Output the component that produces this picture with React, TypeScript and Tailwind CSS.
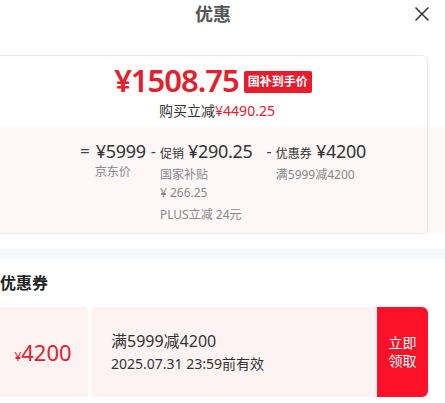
export default function App() {
  return (
    <div className="w-[445px] h-[403px] overflow-hidden bg-white font-['Noto_Sans','Noto_Sans_CJK_SC',sans-serif] text-[#333]">
      <header className="relative h-[28px] flex items-center justify-center">
        <h1 className="text-[18px] font-bold text-[#555] ml-[-19px] leading-none">优惠</h1>
        <button className="absolute right-[15px] top-[6px] text-[#333]">
          <svg width="16" height="16" viewBox="0 0 16 16" fill="none" stroke="currentColor" strokeWidth="1.5">
            <path d="M1.5 1.5L14.5 14.5M14.5 1.5L1.5 14.5" />
          </svg>
        </button>
      </header>

      <section className="mt-[27px] bg-[linear-gradient(#fff_72px,#fdf8f8_72px,#fdf8f8_178px,#fff_178px)]">
        <div className="ml-[-12px] mr-[17px] border border-[#f1e4e6] rounded-md overflow-hidden">
          <div className="h-[71px] flex flex-col items-center pt-[4px] bg-white">
            <div className="flex items-center gap-[5px] ml-[10px]">
              <span className="text-[#e4202d] font-semibold leading-[40px] text-[31px] tracking-[-1px]">¥1508.75</span>
              <span className="bg-[#e81c2c] text-white text-[12px] font-bold leading-none px-[4px] py-[5px] rounded-[2px] mt-[4px]">国补到手价</span>
            </div>
            <p className="text-[14px] ml-[18px] leading-[21px] text-[#333]">
              购买立减<span className="text-[#e4202d]">¥4490.25</span>
            </p>
          </div>
          <div className="h-[106px] bg-[#fdf7f7] pt-[13px] flex justify-center">
            <div className="flex ml-[30px]">
              <div className="flex">
                <span className="text-[17px] leading-[22px] text-[#444] mr-[6px]">=</span>
                <div className="flex flex-col">
                  <span className="text-[18px] leading-[22px] text-[#333] tracking-[-0.3px]">¥5999</span>
                  <span className="text-[12px] text-[#888] mt-[1px] leading-[18px] ml-[-1px]">京东价</span>
                </div>
              </div>
              <div className="flex ml-[5px]">
                <span className="text-[16px] leading-[22px] text-[#444] mr-[4px]">-</span>
                <div className="flex flex-col">
                  <span className="leading-[22px] text-[#333]">
                    <span className="text-[12px]">促销</span> <span className="text-[18px] tracking-[-0.3px]">¥290.25</span>
                  </span>
                  <span className="text-[12px] text-[#888] mt-[1px] leading-[18px]">国家补贴</span>
                  <span className="text-[12px] text-[#888] leading-[18px]">¥ 266.25</span>
                  <span className="text-[12px] text-[#888] leading-[18px] mt-[4px]">PLUS立减 24元</span>
                </div>
              </div>
              <div className="flex ml-[14px]">
                <span className="text-[16px] leading-[22px] text-[#444] mr-[4px]">-</span>
                <div className="flex flex-col">
                  <span className="leading-[22px] text-[#333]">
                    <span className="text-[12px]">优惠券</span> <span className="text-[18px] tracking-[-0.3px]">¥4200</span>
                  </span>
                  <span className="text-[12px] text-[#888] mt-[1px] leading-[18px]">满5999减4200</span>
                </div>
              </div>
            </div>
          </div>
        </div>
      </section>

      <div className="mt-[15px] h-[10px] bg-[#f5f8fc]" />

      <h2 className="mt-[16px] text-[16px] font-bold text-[#222] leading-none">优惠券</h2>

      <div className="mt-[16px] ml-[-12px] mr-[17px] h-[90px] flex">
        <div className="w-[100px] bg-[#fdf3f3] rounded-l-md flex items-center justify-center pl-[10px]">
          <span className="text-[#e4202d] leading-none">
            <span className="text-[12px]">¥</span>
            <span className="text-[22px]">4200</span>
          </span>
        </div>
        <div className="relative w-[3px] bg-white">
          <span className="absolute left-[-2px] top-[-3px] w-[7px] h-[7px] rounded-full bg-white" />
        </div>
        <div className="flex-1 bg-[#fdf3f3] flex flex-col justify-center pl-[20px]">
          <span className="text-[16px] text-[#333] leading-[22px]">满5999减4200</span>
          <span className="text-[14px] text-[#333] leading-[20px] mt-[2px]">2025.07.31 23:59前有效</span>
        </div>
        <button className="w-[51px] bg-[#fb1128] rounded-r-md text-white text-[14px] leading-[18px] flex flex-col items-center justify-center">
          <span>立即</span>
          <span>领取</span>
        </button>
      </div>
    </div>
  );
}
